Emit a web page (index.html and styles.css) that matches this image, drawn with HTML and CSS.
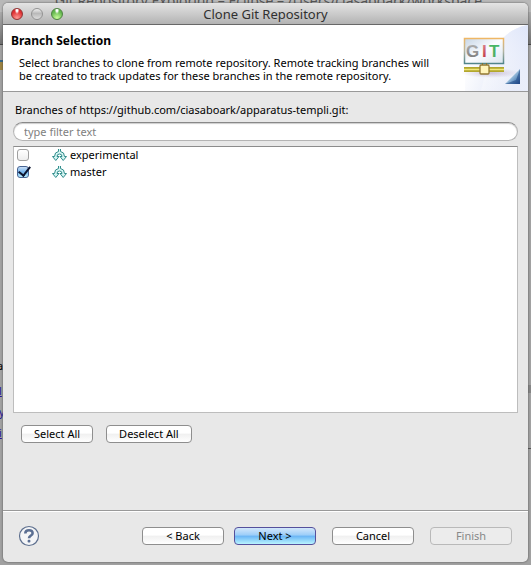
FILE: index.html
```html
<!DOCTYPE html>
<html lang="en">
<head>
<meta charset="utf-8">
<title>Clone Git Repository</title>
<link rel="stylesheet" href="styles.css">
</head>
<body>
<div class="backdrop" aria-hidden="true">
  <div class="back-title">Git Repository Exploring – Eclipse – /Users/ciasaboark/workspace</div>
  <div class="back-bar"></div>
  <span class="back-mark"></span>
  <span class="back-text">a</span>
  <div class="back-links"><span>l</span><span>y</span><span>i</span></div>
  <div class="back-panel"></div>
</div>
<main class="window">
  <div class="titlebar">
    <div class="lights">
      <button class="light red" type="button" aria-label="Close"></button>
      <button class="light gray" type="button" aria-label="Minimize"></button>
      <button class="light green" type="button" aria-label="Zoom"></button>
    </div>
    <h1>Clone Git Repository</h1>
  </div>
  <header class="banner">
    <div class="intro">
      <h2>Branch Selection</h2>
      <p>Select branches to clone from remote repository. Remote tracking branches will<br>be created to track updates for these branches in the remote repository.</p>
    </div>
    <svg class="art" viewBox="0 0 75 66" width="75" height="66" aria-hidden="true">
      <defs>
        <linearGradient id="sky" x1="0" y1="0" x2="1" y2=".4"><stop offset=".2" stop-color="#fff"/><stop offset="1" stop-color="#dde3f6"/></linearGradient>
        <linearGradient id="arc" x1="1" y1="0" x2="0.3" y2="1"><stop offset="0" stop-color="#dfe6fa"/><stop offset="1" stop-color="#fff" stop-opacity=".3"/></linearGradient>
        <linearGradient id="screen" x1="0" y1="0" x2="1" y2="1"><stop offset="0" stop-color="#c7d6e6"/><stop offset=".5" stop-color="#fafcff"/><stop offset="1" stop-color="#dce6ef"/></linearGradient>
        <linearGradient id="edge" x1="0" y1="0" x2="0" y2="1"><stop offset="0" stop-color="#efb765"/><stop offset=".5" stop-color="#b5b5a2"/><stop offset="1" stop-color="#51858b"/></linearGradient>
        <linearGradient id="steel" x1="0" y1="0" x2="0" y2="1"><stop offset="0" stop-color="#b8b8b8"/><stop offset="1" stop-color="#737373"/></linearGradient>
        <linearGradient id="rose" x1="0" y1="0" x2="0" y2="1"><stop offset="0" stop-color="#dc8b94"/><stop offset="1" stop-color="#bd2c39"/></linearGradient>
        <linearGradient id="leaf" x1="0" y1="0" x2="0" y2="1"><stop offset="0" stop-color="#45b865"/><stop offset="1" stop-color="#55ad66"/></linearGradient>
        <linearGradient id="corner" x1="0" y1="0" x2="1" y2="1"><stop offset=".45" stop-color="#a9cae4"/><stop offset=".75" stop-color="#5585b8"/><stop offset="1" stop-color="#254b8b"/></linearGradient>
        <radialGradient id="shade"><stop offset="0" stop-color="#a48baf" stop-opacity=".5"/><stop offset="1" stop-color="#b8a4c4" stop-opacity="0"/></radialGradient>
      </defs>
      <rect width="75" height="66" fill="#fff"/>
      <path d="M75 0Q54 4 43 22H12V66H75Z" fill="url(#sky)"/>
      <path d="M75 0Q54 4 43 22Q34 38 28 66H75Z" fill="url(#arc)"/>
      <ellipse cx="38" cy="48" rx="30" ry="5" fill="url(#shade)"/>
      <rect x="11.500" y="13.500" width="39" height="25" fill="url(#screen)" stroke="url(#edge)" stroke-width="1.500"/>
      <text class="git" y="32"><tspan x="13" fill="url(#steel)">G</tspan><tspan x="29" fill="url(#rose)">I</tspan><tspan x="36" fill="url(#leaf)">T</tspan></text>
      <path d="M29 41.500h5M29 39h1M33 39h1" stroke="#7d7436" stroke-width="2"/>
      <rect x="11" y="42" width="40" height="5" fill="#b2a72e"/>
      <path d="M11 44.500H51" stroke="#f1e87a" stroke-width="1.500"/>
      <rect x="27" y="40" width="9" height="9" rx="1" fill="#fff4bb" stroke="#937833" stroke-width="1.300"/>
      <path d="M67 44V59H52Z" fill="url(#corner)"/>
      <path d="M67 44V59H52L63 55Z" fill="#183e7e" opacity=".5"/>
    </svg>
  </header>
  <section class="content">
    <label class="caption" for="filter">Branches of https://github.com/ciasaboark/apparatus-templi.git:</label>
    <input class="filter" id="filter" type="text" placeholder="type filter text">
    <div class="tree">
      <label class="row"><input type="checkbox">
        <svg class="branch" viewBox="0 0 15 14" width="15" height="14" aria-hidden="true"><path d="M6.500 1V3.500Q2.500 4 2.500 8.500H.5L3.800 12.500 7 8.500H5Q5 6 7.500 6T10 8.500H8L11.200 12.500 14.500 8.500H12.500Q12.500 4 8.500 3.500V1"/></svg>
        <span>experimental</span></label>
      <label class="row"><input type="checkbox" checked>
        <svg class="branch" viewBox="0 0 15 14" width="15" height="14" aria-hidden="true"><path d="M6.500 1V3.500Q2.500 4 2.500 8.500H.5L3.800 12.500 7 8.500H5Q5 6 7.500 6T10 8.500H8L11.200 12.500 14.500 8.500H12.500Q12.500 4 8.500 3.500V1"/></svg>
        <span>master</span></label>
    </div>
    <div class="selection">
      <button class="push" type="button">Select All</button>
      <button class="push" type="button">Deselect All</button>
    </div>
  </section>
  <footer class="actions">
    <button class="help" type="button" aria-label="Help">
      <svg viewBox="0 0 22 22" width="22" height="22" aria-hidden="true"><circle cx="11" cy="11" r="9.500" fill="#f4f5f7" stroke="#5e708f" stroke-width="1.200"/><path d="M7.300 8.400Q7.300 5.200 11 5.200T14.600 8.200Q14.600 9.700 12.800 10.600Q11 11.600 11 13.300" fill="none" stroke="#5b6f93" stroke-width="2.600"/><rect x="9.600" y="14.800" width="2.800" height="2.600" rx="1" fill="#5b6f93"/></svg>
    </button>
    <div class="steps">
      <button class="push" type="button">&lt; Back</button>
      <button class="push primary" type="button">Next &gt;</button>
    </div>
    <button class="push" type="button">Cancel</button>
    <button class="push" type="button" disabled>Finish</button>
  </footer>
</main>
</body>
</html>
```
FILE: styles.css
```css
* { box-sizing: border-box; }
body {
  margin: 0;
  padding: 3px;
  min-height: 100vh;
  display: flex;
  background: #a1a1a1;
  font: 11px/13px "Noto Sans", "Open Sans", sans-serif;
  color: #000;
}
button, input { font: inherit; color: inherit; margin: 0; }

/* Parts of the application window that show around the dialog */
.backdrop { position: absolute; inset: 0; overflow: hidden; z-index: -1; }
.back-title {
  height: 12px;
  padding-left: 55px;
  background: #b8b8b8;
  color: #555;
  font-size: 14px;
  line-height: 1px;
  white-space: nowrap;
}
.back-bar { height: 33px; background: linear-gradient(#aaa, #707070); border-bottom: 1px solid #444; }
.back-mark { position: absolute; top: 60px; left: 0; width: 3px; height: 10px; background: #9c8342; border-top: 2px solid #368; }
.back-text { position: absolute; top: 359px; left: -3px; }
.back-links { position: absolute; top: 384px; left: -1px; display: grid; gap: 8px; color: #22149a; text-decoration: underline; }
.back-panel { position: absolute; top: 385px; right: 0; width: 3px; height: 64px; border-top: 8px solid #858585; border-bottom: 1px solid #555; }

.window {
  flex: 1;
  display: flex;
  flex-direction: column;
  min-height: calc(100vh - 6px);
  border-radius: 5px;
  overflow: hidden;
  background: #e8e8e8;
  box-shadow: 0 0 2px #444;
}
.titlebar {
  display: grid;
  grid-template-columns: 1fr auto 1fr;
  align-items: center;
  height: 22px;
  padding: 0 8px;
  background: linear-gradient(#e4e4e4, #b3b3b3);
  border-bottom: 1px solid #686868;
}
.titlebar h1 { margin: 0; font-size: 13px; line-height: 18px; font-weight: 400; color: #303030; }
.lights { display: flex; gap: 8px; }
.light { width: 12px; height: 12px; padding: 0; border: 1px solid; border-radius: 50%; }
.red { border-color: #8f3434; background: radial-gradient(ellipse at 50% 10%, #fff 0 12%, transparent 32%), radial-gradient(circle at 50% 90%, #ff9c95, #df2f31 65%); }
.gray { border-color: #929292; background: linear-gradient(#eee, #b9b9b9 45%, #dcdcdc); }
.green { border-color: #4d8141; background: radial-gradient(ellipse at 50% 10%, #fff 0 12%, transparent 32%), radial-gradient(circle at 50% 90%, #cbff9c, #62b64d 65%); }

.banner {
  display: flex;
  justify-content: space-between;
  background: #fff;
  border-bottom: 1px solid #999;
}
.intro { padding: 9px 0 0 8px; white-space: nowrap; }
.intro h2 { margin: 0; font-size: 12px; line-height: 14px; font-weight: 700; }
.intro p { margin: 8px 0 0 8px; }
.art { display: block; flex: none; }
.git { font: 700 17px "Liberation Sans", sans-serif; }

.content { flex: 1; padding: 11px 10px 0; display: flex; flex-direction: column; }
.caption { padding-left: 2px; }
.filter {
  width: 100%;
  height: 19px;
  margin-top: 6px;
  padding: 0 10px;
  border: 1px solid #b4b4b4;
  border-top-color: #888;
  border-radius: 10px;
  background: #fff;
  box-shadow: inset 0 1px 1px #ccc;
  outline: 0;
}
.filter::placeholder { color: #808080; opacity: 1; }
.tree {
  flex: 1;
  margin-top: 5px;
  background: #fff;
  border: 1px solid #bdbdbd;
  border-top-color: #8c8c8c;
}
.row { display: flex; align-items: center; height: 17px; padding: 0 3px 2px; }
.row input {
  appearance: none;
  width: 12px;
  height: 12px;
  border: 1px solid #a0a0a0;
  border-radius: 3px;
  background: linear-gradient(#fff, #eee);
  position: relative;
}
.row input:checked { border-color: #476493; background: linear-gradient(#c9def6, #75b5ee 50%, #b7edff); }
.row input:checked::after {
  content: "";
  position: absolute;
  left: 3px;
  top: -3px;
  width: 5px;
  height: 10px;
  border: solid #0b1430;
  border-width: 0 2px 2px 0;
  transform: rotate(38deg);
}
.branch { margin: 0 3px 0 23px; fill: #d5f5f3; stroke: #318c8b; stroke-width: 1; }
.selection { display: flex; gap: 13px; padding: 12px 8px 67px; }

.push {
  height: 18px;
  padding: 0 12px;
  border: 1px solid #8e8e8e;
  border-radius: 4px;
  background: linear-gradient(#fff, #fff 45%, #f0f0f0 50%, #fff);
  line-height: 14px;
  white-space: nowrap;
}
.push.primary { border-color: #55509c; background: linear-gradient(#d3e7fb, #9bcdf8 45%, #69b4f5 50%, #b9f4ff); }
.push:disabled { border-color: #b9b9b9; background: #ececec; color: #888; }

.actions {
  display: flex;
  align-items: center;
  gap: 16px;
  padding: 14px 16px 15px 15px;
  border-top: 1px solid #999;
  box-shadow: inset 0 1px #fff;
}
.actions .push { width: 82px; }
.help { width: 22px; height: 22px; padding: 0; margin-right: auto; border: 0; background: none; }
.help svg { display: block; }
.steps { display: flex; gap: 10px; }
```
